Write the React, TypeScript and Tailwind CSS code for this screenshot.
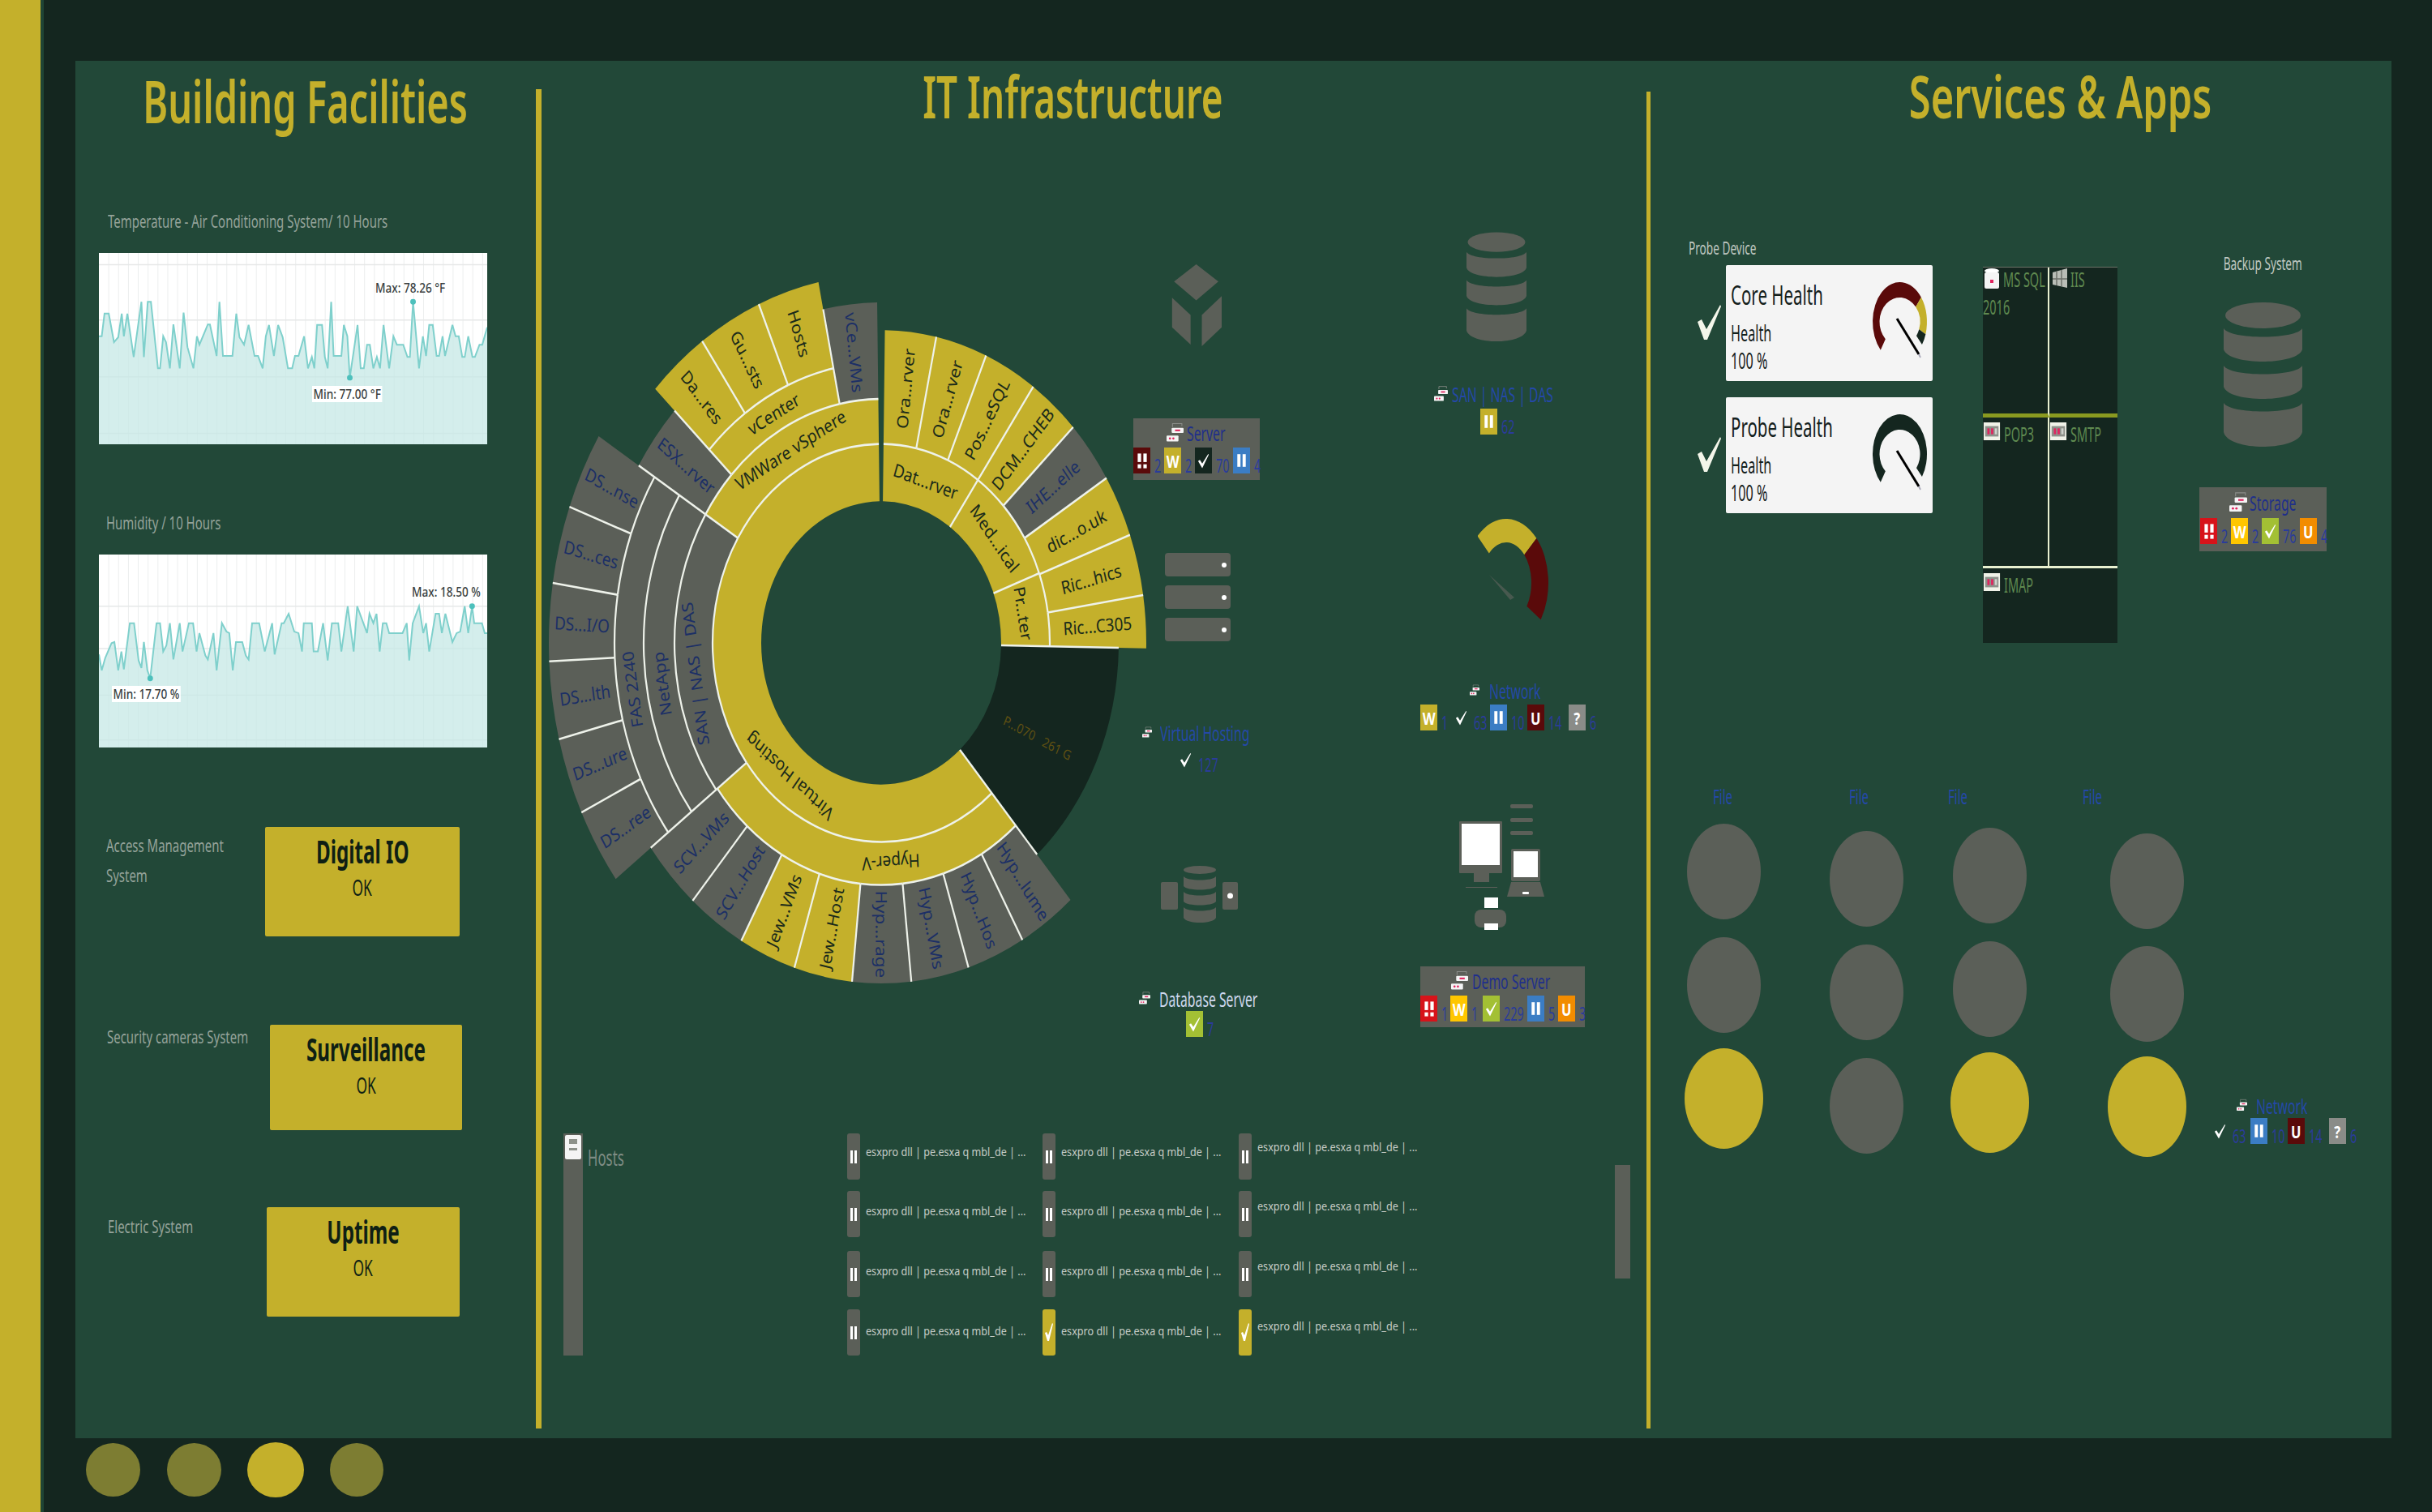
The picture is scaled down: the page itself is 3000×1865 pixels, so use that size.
import React from 'react';

// clockwise from 12 o'clock, in degrees
const pt = (rx: number, ry: number, a: number, cx = 0, cy = 0) => {
	const t = ((a - 90) * Math.PI) / 180;
	return `${(cx + rx * Math.cos(t)).toFixed(2)} ${(cy + ry * Math.sin(t)).toFixed(2)}`;
};

const band = (ix: number, iy: number, ox: number, oy: number, a0: number, a1: number, cx = 0, cy = 0) => {
	const large = a1 - a0 > 180 ? 1 : 0;
	return `M${pt(ix, iy, a0, cx, cy)} L${pt(ox, oy, a0, cx, cy)} A${ox} ${oy} 0 ${large} 1 ${pt(ox, oy, a1, cx, cy)} L${pt(ix, iy, a1, cx, cy)} A${ix} ${iy} 0 ${large} 0 ${pt(ix, iy, a0, cx, cy)}Z`;
};

const YELLOW = '#c4b02b';
const GREY = '#5b5f58';
const DARK = '#14261f';

type Seg = { r0: number; r1: number; a0: number; a1: number; fill: string; label?: string };

const radial = (r0: number, r1: number, stops: number[], labels: string[], fills: string[]): Seg[] =>
	labels.map((label, i) => ({ r0, r1, a0: stops[i], a1: stops[i + 1], fill: fills[i] ?? fills[0], label }));

const outerRings = [
	{ r0: 208, r1: 327, stops: [0.8, 12, 23.3, 35, 46.4, 58.2, 69.8, 81.2, 91] },
	{ r0: 253, r1: 356, stops: [139, 150.7, 162.4, 174, 185.8, 197.5, 209, 220.8, 233] },
	{ r0: 329, r1: 410, stops: [233, 244.4, 255.8, 267.3, 278.8, 290.3, 301.8] },
	{ r0: 293, r1: 385, stops: [313.6, 325, 336.9, 348.4] },
];

const segments: Seg[] = [
	...radial(208, 327, outerRings[0].stops, ['Ora...rver', 'Ora...rver', 'Pos...eSQL', 'DCM...CHEB', 'IHE...elle', 'dic...o.uk', 'Ric...hics', 'Ric...C305'], [YELLOW, YELLOW, YELLOW, YELLOW, GREY, YELLOW, YELLOW, YELLOW]),
	...radial(253, 356, outerRings[1].stops, ['Hyp...lume', 'Hyp...Hos', 'Hyp...VMs', 'Hyp...rage', 'Jew...Host', 'Jew...VMs', 'SCV...Host', 'SCV...VMs'], [GREY, GREY, GREY, GREY, YELLOW, YELLOW, GREY, GREY]),
	...radial(329, 410, outerRings[2].stops, ['DS...ree', 'DS...ure', 'DS...lth', 'DS...I/O', 'DS...ces', 'DS...nse'], [GREY]),
	...radial(255, 352, [301.8, 313.6], ['ESX...rver'], [GREY]),
	...radial(293, 385, outerRings[3].stops, ['Da...res', 'Gu...sts', 'Hosts'], [YELLOW]),
	...radial(255, 356, [348.4, 359.2], ['vCe...VMs'], [GREY]),
];

const plainSegments: Seg[] = [
	{ r0: 148, r1: 293, a0: 91, a1: 139, fill: DARK },
	{ r0: 148, r1: 208, a0: 0.8, a1: 91, fill: YELLOW },
	{ r0: 148, r1: 208, a0: 139, a1: 359.2, fill: YELLOW },
	{ r0: 208, r1: 255, a0: 139, a1: 233, fill: YELLOW },
	{ r0: 208, r1: 255, a0: 233, a1: 301.8, fill: GREY },
	{ r0: 255, r1: 293, a0: 233, a1: 301.8, fill: GREY },
	{ r0: 293, r1: 329, a0: 233, a1: 301.8, fill: GREY },
	{ r0: 208, r1: 255, a0: 301.8, a1: 359.2, fill: YELLOW },
	{ r0: 255, r1: 293, a0: 313.6, a1: 348.4, fill: YELLOW },
];

// white spokes that are not inside one of the outer rings: [from, to, angle]
const spokes: [number, number, number][] = [
	[148, 208, 35],
	[148, 208, 69.5],
	[148, 293, 91],
	[148, 293, 139],
	[208, 356, 233],
	[208, 352, 301.8],
	[255, 352, 313.6],
	[255, 356, 348.4],
];

// tangent labels: [text, angle, radius, rotation, colour]
const arcLabels: [string, number, number, number, string][] = [
	['Dat...rver', 18, 178, 18, '#1a2a1a'],
	['Med...ical', 52, 178, 52, '#1a2a1a'],
	['Pr...ter', 80, 178, 80, '#1a2a1a'],
	['Virtual Hosting', 219, 180, 219, '#1a2a1a'],
	['Hyper-V', 177, 230, 177, '#1a2a1a'],
	['VMWare vSphere', 331, 231, 331, '#1a2a1a'],
	['vCenter', 331, 274, 331, '#1a2a1a'],
	['SAN | NAS | DAS', 262, 232, 262, '#1c2f66'],
	['NetApp', 261, 274, 261, '#1c2f66'],
	['FAS 2240', 261, 311, 261, '#1c2f66'],
];

function Sunburst() {
	const xy = (r: number, a: number) => pt(r, r, a).split(' ');
	const line = (r0: number, r1: number, a: number) => `M${pt(r0, r0, a)} L${pt(r1, r1, a)}`;
	const all = [...plainSegments, ...segments];
	return (
		<svg width="760" height="900" viewBox="0 0 760 900" className="mt-[189px] ml-[2px] shrink-0">
			<g transform="translate(417 453) scale(1 1.18)">
				{all.map((s, i) => (
					<path key={i} d={band(s.r0, s.r0, s.r1, s.r1, s.a0, s.a1)} fill={s.fill} />
				))}
				<g fill="none" stroke="#eef2ea" strokeWidth="2.2">
					{all
						.filter(s => s.r0 > 148)
						.map((s, i) => (
							<path key={i} d={`M${pt(s.r0, s.r0, s.a0)} A${s.r0} ${s.r0} 0 0 1 ${pt(s.r0, s.r0, s.a1)}`} />
						))}
					{outerRings.map(ring =>
						ring.stops.slice(1, -1).map(a => <path key={`${ring.r0}-${a}`} d={line(ring.r0, ring.r1, a)} />),
					)}
					{spokes.map(([r0, r1, a]) => (
						<path key={a} d={line(r0, r1, a)} />
					))}
				</g>
				<g fontFamily="'Noto Sans', sans-serif" fontSize="19" textAnchor="middle" dominantBaseline="central">
					{segments.map((s, i) => {
						const mid = (s.a0 + s.a1) / 2;
						const [x, y] = xy((s.r0 + s.r1) / 2, mid);
						const rot = mid <= 180 ? mid - 90 : mid + 90;
						return (
							<text key={i} x={x} y={y} transform={`rotate(${rot} ${x} ${y})`} fill={s.fill === GREY ? '#1c2f66' : '#1a2a1a'}>
								{s.label}
							</text>
						);
					})}
					{arcLabels.map(([label, a, r, rot, fill]) => {
						const [x, y] = xy(r, a);
						return (
							<text key={label} x={x} y={y} transform={`rotate(${rot} ${x} ${y})`} fill={fill}>
								{label}
							</text>
						);
					})}
					<text transform="translate(193 99) rotate(25)" fill="#5f5012" fontSize="14">
						P...070 &#160; 261 G
					</text>
				</g>
			</g>
		</svg>
	);
}

const tempLine =
	'282,678 290,678 298,632 310,632 325,690 337,680 347,632 353,678 363,632 381,720 403,608 410,720 421,608 430,608 450,743 456,743 465,678 473,690 484,743 494,654 512,743 523,630 534,700 551,743 561,678 568,695 592,654 598,654 617,718 625,608 635,718 662,718 673,632 682,680 695,695 708,655 725,718 735,718 748,743 757,678 766,655 780,718 792,655 805,680 820,743 832,743 840,718 850,718 866,678 877,743 888,720 895,743 903,655 917,655 925,720 933,743 943,608 950,718 972,718 979,655 989,678 996,762 1018,655 1027,743 1036,743 1045,695 1053,695 1063,743 1073,720 1082,743 1092,655 1108,743 1120,678 1130,695 1148,695 1160,720 1167,720 1176,608 1193,743 1204,678 1213,718 1222,655 1232,655 1243,718 1250,718 1260,678 1267,718 1288,655 1297,678 1306,678 1316,720 1323,720 1333,678 1345,720 1352,720 1365,695 1373,695 1387,660';

const humidityLine =
	'282,1318 290,1350 300,1325 318,1295 326,1293 337,1350 346,1312 353,1348 370,1255 382,1255 395,1330 403,1345 410,1293 420,1350 428,1366 446,1255 456,1255 465,1312 474,1300 484,1255 494,1328 512,1255 520,1312 538,1255 550,1255 560,1312 568,1275 585,1320 592,1328 608,1275 617,1350 632,1255 645,1272 653,1275 663,1350 672,1293 690,1293 700,1320 708,1328 718,1255 738,1255 754,1312 775,1255 782,1318 802,1255 808,1255 822,1236 838,1272 850,1275 860,1312 865,1255 888,1255 893,1312 905,1312 920,1255 933,1330 945,1255 963,1255 972,1312 990,1221 1007,1312 1017,1221 1045,1275 1052,1236 1063,1255 1072,1236 1081,1312 1090,1255 1100,1255 1108,1275 1146,1275 1158,1255 1165,1330 1175,1255 1193,1221 1205,1275 1213,1255 1222,1312 1240,1236 1250,1236 1258,1275 1268,1236 1288,1293 1300,1275 1310,1272 1323,1221 1333,1275 1344,1221 1350,1255 1372,1255 1380,1275 1387,1275';

function Spark({ points, top, dots, rows }: { points: string; top: number; dots: [number, number][]; rows: number[] }) {
	const bottom = top + 388;
	const cols = Array.from({ length: 40 }, (_, i) => 282 + (i + 1) * 28);
	return (
		<svg viewBox={`282 ${top} 1105 388`} preserveAspectRatio="none" className="absolute inset-0 h-full w-full">
			{cols.map(x => (
				<line key={x} x1={x} x2={x} y1={top} y2={bottom} stroke="#eceeee" vectorEffect="non-scaling-stroke" />
			))}
			{rows.map(y => (
				<line key={y} x1={282} x2={1387} y1={y} y2={y} stroke="#e6e8e8" strokeWidth="1.5" vectorEffect="non-scaling-stroke" />
			))}
			<polygon points={`282,${bottom} ${points} 1387,${bottom}`} fill="#c5e8e6" fillOpacity="0.75" />
			<polyline points={points} fill="none" stroke="#7fd0cc" strokeWidth="2" vectorEffect="non-scaling-stroke" />
			{dots.map(([x, y]) => (
				<ellipse key={x} cx={x} cy={y} rx="8" ry="5.7" fill="#4dc0bc" />
			))}
		</svg>
	);
}

const chartNote = 'absolute origin-left scale-x-[0.8] whitespace-nowrap text-[17px] leading-[20px] font-medium text-[#3a3f3f]';

function NodeIcon({ className }: { className: string }) {
	return (
		<svg viewBox="0 0 20 24" className={className}>
			<path d="M7 5V1h11v3" fill="none" stroke="#8a8d88" strokeWidth="1" />
			<rect x="6" y="6" width="14" height="6" rx="1" fill="#f4f4f4" />
			<rect x="10" y="8" width="6" height="2" fill="#e0245e" />
			<rect x="0" y="15" width="14" height="7" rx="1" fill="#f4f4f4" />
			<circle cx="4" cy="18.5" r="1.3" fill="#e0245e" />
			<circle cx="8" cy="18.5" r="1.3" fill="#e0245e" />
		</svg>
	);
}

function Glyph({ kind }: { kind: string }) {
	if (kind === 'W' || kind === 'U' || kind === '?') {
		return <span className="scale-x-[0.75] text-[22px] leading-none font-bold text-white">{kind}</span>;
	}
	if (kind === 'crit') {
		return (
			<svg viewBox="0 0 20 30" className="h-[21px] w-[14px]">
				<rect x="2" y="2" width="6" height="15" fill="#fff" />
				<rect x="2" y="21" width="6" height="7" fill="#fff" />
				<rect x="12" y="2" width="6" height="15" fill="#fff" />
				<rect x="12" y="21" width="6" height="7" fill="#fff" />
			</svg>
		);
	}
	if (kind === 'pause') {
		return (
			<svg viewBox="0 0 20 30" className="h-[20px] w-[13px]">
				<rect x="2" y="3" width="6" height="24" fill="#fff" />
				<rect x="12" y="3" width="6" height="24" fill="#fff" />
			</svg>
		);
	}
	return (
		<svg viewBox="0 0 20 30" className="h-[22px] w-[15px]">
			<path d="M1 16l3-2 4 6L18 4l1 1L8 28z" fill="#fff" />
		</svg>
	);
}

function Stat({ kind, bg, count, w }: { kind: string; bg: string; count?: string; w: string }) {
	return (
		<div className={`flex shrink-0 ${w}`}>
			<div className={`flex h-[32px] w-[21px] shrink-0 items-center justify-center ${bg}`}>
				<Glyph kind={kind} />
			</div>
			{count && (
				<span className="mt-[8px] ml-[5px] origin-left scale-x-[0.6] text-[24px] leading-[28px] text-[#2a3c9a]">{count}</span>
			)}
		</div>
	);
}

const labelText = 'inline-block origin-left scale-x-[0.63] whitespace-nowrap text-[25px] leading-[24px]';
const sideLabel = 'origin-left scale-x-[0.68] whitespace-nowrap text-[22px] text-[#95a39a]';

function Badge({ children, className }: { children: React.ReactNode; className: string }) {
	return <div className={`flex flex-col bg-[#5b5f58] ${className}`}>{children}</div>;
}

function Db({ className }: { className: string }) {
	return (
		<svg viewBox="0 0 100 180" preserveAspectRatio="none" className={className}>
			<g fill="#5b5f58">
				<ellipse cx="50" cy="18" rx="48" ry="16" />
				<path d="M0 34c8 14 92 14 100 0v26c-6 20-94 20-100 0z" />
				<path d="M0 80c8 14 92 14 100 0v26c-6 20-94 20-100 0z" />
				<path d="M0 126c8 14 92 14 100 0v36c-6 24-94 24-100 0z" />
			</g>
		</svg>
	);
}

function CoreGauge({ stops }: { stops: [number, number, string][] }) {
	return (
		<svg viewBox="0 0 67 95" className="mt-[20px] h-[95px] w-[67px] shrink-0 overflow-visible">
			{stops.map(([a0, a1, fill]) => (
				<path key={a0} d={band(25, 30, 33.5, 49, a0, a1, 33.5, 50)} fill={fill} />
			))}
			<line x1="30" y1="46" x2="57" y2="90" stroke="#000" strokeWidth="3" />
			<line x1="57" y1="90" x2="59" y2="94" stroke="#aab" strokeWidth="2" />
		</svg>
	);
}

function HealthCard({ title, stops, className }: { title: string; stops: [number, number, string][]; className: string }) {
	return (
		<div className={`flex ${className}`}>
			<svg viewBox="0 0 29 43" className="mt-[49px] mr-[6px] ml-[11px] h-[43px] w-[29px] shrink-0">
				<polygon points="0,21 5,18 11,30 28,0 29,2 12,43 8,43" fill="#f4f6ea" />
			</svg>
			<div className="flex h-[143px] w-[255px] shrink-0 rounded-[2px] bg-[#f4f4f4] pr-[7px] pl-[6px] text-[#14201c]">
				<div className="min-w-0 flex-1">
					<p className="mt-[19px] origin-left scale-x-[0.64] whitespace-nowrap text-[32px] leading-[36px]">{title}</p>
					<p className="mt-[12px] origin-left scale-x-[0.6] whitespace-nowrap text-[27px] leading-[34px]">Health</p>
					<p className="origin-left scale-x-[0.6] whitespace-nowrap text-[27px] leading-[34px]">100 %</p>
				</div>
				<CoreGauge stops={stops} />
			</div>
		</div>
	);
}

const svcText = 'origin-left scale-x-[0.58] whitespace-nowrap text-[25px] leading-[28px] text-[#5f8a50]';

function SvcNode() {
	return (
		<svg viewBox="0 0 22 24" className="h-[22px] w-[22px] shrink-0">
			<rect width="22" height="24" fill="#f0f2e8" />
			<rect x="2" y="5" width="18" height="14" fill="#8d918a" />
			<rect x="5" y="8" width="3" height="8" fill="#e0245e" />
			<rect x="10" y="8" width="3" height="8" fill="#e0245e" />
			<rect x="15" y="8" width="3" height="8" fill="#cfd2cc" />
		</svg>
	);
}

function Services() {
	return (
		<div className="mt-[178px] ml-[62px] grid h-[464px] w-[166px] shrink-0 grid-cols-[82px_84px] grid-rows-[185px_186px_93px] border-t border-[#6d7268] bg-[#14261f]">
			<div className="border-r-2 border-b-[5px] border-r-[#e8f0d0] border-b-[#8a9a20]">
				<div className="flex items-center">
					<svg viewBox="0 0 20 28" className="ml-[1px] h-[28px] w-[20px] shrink-0">
						<ellipse cx="10" cy="4" rx="9" ry="3" fill="#fff" />
						<rect x="1" y="6" width="18" height="20" rx="2" fill="#f4f4f4" />
						<rect x="8" y="15" width="4" height="4" fill="#e0245e" />
					</svg>
					<span className={`ml-[4px] ${svcText}`}>MS SQL</span>
				</div>
				<p className={`mt-[6px] ${svcText}`}>2016</p>
			</div>
			<div className="border-b-[5px] border-b-[#8a9a20]">
				<div className="flex items-center">
					<svg viewBox="0 0 20 28" className="ml-[3px] h-[28px] w-[20px] shrink-0">
						<path d="M1 6l18-5v24l-18-4z" fill="#b9bdb6" />
						<path d="M6 5v17M12 3v20M1 14h18" stroke="#6e716b" strokeWidth="1.5" />
					</svg>
					<span className={`ml-[3px] ${svcText}`}>IIS</span>
				</div>
			</div>
			<div className="flex items-start border-r-2 border-b-[3px] border-r-[#e8f0d0] border-b-[#e8f0d0] pt-[6px]">
				<SvcNode />
				<span className={`ml-[4px] ${svcText}`}>POP3</span>
			</div>
			<div className="flex items-start border-b-[3px] border-b-[#e8f0d0] pt-[6px]">
				<SvcNode />
				<span className={`ml-[4px] ${svcText}`}>SMTP</span>
			</div>
			<div className="col-span-2 flex items-start pt-[6px]">
				<SvcNode />
				<span className={`ml-[4px] ${svcText}`}>IMAP</span>
			</div>
		</div>
	);
}

const hostText = 'origin-left scale-x-[0.9] whitespace-nowrap text-[14px] leading-[20px] text-[#c6ccc6]';
const hostOffsets = ['mt-[13px]', 'mt-[15px]', 'mt-[15px]', 'mt-[17px]'];
const lastColOffsets = ['mt-[7px]', 'mt-[9px]', 'mt-[9px]', 'mt-[11px]'];

function HostCell({ row, col }: { row: number; col: number }) {
	const ok = row === 3 && col > 0;
	return (
		<div className="flex h-full items-start">
			<div className={`flex h-[57px] w-[16px] shrink-0 items-center justify-center rounded-[3px] ${ok ? 'bg-[#c4b02b]' : 'bg-[#5b5f58]'}`}>
				{ok ? (
					<svg viewBox="0 0 10 24" className="h-[24px] w-[10px]">
						<path d="M0 12l2-1 2 4L9 0l1 1-5 21H3z" fill="#fff" />
					</svg>
				) : (
					<svg viewBox="0 0 8 16" className="h-[16px] w-[8px]">
						<rect x="0" width="3" height="16" fill="#fff" />
						<rect x="5" width="3" height="16" fill="#fff" />
					</svg>
				)}
			</div>
			<p className={`ml-[7px] ${col === 2 ? lastColOffsets[row] : hostOffsets[row]} ${hostText}`}>esxpro dll | pe.esxa q mbl_de | ...</p>
		</div>
	);
}

function Oval({ className }: { className: string }) {
	return <div className={`rounded-[50%] ${className}`} />;
}

function StatusBox({ title, className }: { title: string; className: string }) {
	return (
		<div className={`flex shrink-0 flex-col items-center rounded-[2px] bg-[#c4b02b] text-[#0f1f14] ${className}`}>
			<p className="mt-[6px] scale-x-[0.62] whitespace-nowrap text-[39px] leading-[48px] font-bold">{title}</p>
			<p className="scale-x-[0.62] text-[28px] leading-[40px]">OK</p>
		</div>
	);
}

const greyOval = 'h-[118px] w-[91px] bg-[#5b5f58]';
const yellowOval = 'h-[124px] w-[97px] bg-[#c4b02b]';
const fileLabel = 'origin-left scale-x-[0.6] text-[25px] leading-[20px] text-[#2448a8]';

export default function App() {
	return (
		<div className="flex h-[1865px] w-[3000px] overflow-hidden bg-[#14261f] font-['Noto_Sans',sans-serif]">
			<div className="w-[54px] shrink-0 border-r-[4px] border-r-[#1f4434] bg-[#c4b02b]" />
			<div className="pt-[75px] pl-[39px]">
				<main className="flex h-[1699px] w-[2857px] bg-[#224838]">
					{/* Building Facilities */}
					<section className="w-[568px] shrink-0 pl-[29px]">
						<div className="mt-[18px] -ml-[29px] flex h-[62px] w-[568px] justify-center">
							<h1 className="scale-x-[0.643] whitespace-nowrap text-[73px] leading-[62px] font-semibold text-[#c4b02b]">Building Facilities</h1>
						</div>
						<p className={`mt-[107px] ml-[11px] leading-[20px] ${sideLabel}`}>Temperature - Air Conditioning System/ 10 Hours</p>
						<div className="relative mt-[30px] h-[236px] w-[479px] bg-white">
							<Spark points={tempLine} top={509} dots={[[1176, 608], [996, 762]]} rows={[533, 645, 760, 875]} />
							<span className={`top-[33px] left-[341px] ${chartNote}`}>Max: 78.26 °F</span>
							<span className={`top-[164px] left-[263px] bg-white px-[2px] ${chartNote}`}>Min: 77.00 °F</span>
						</div>
						<p className={`mt-[86px] ml-[9px] leading-[20px] ${sideLabel}`}>Humidity / 10 Hours</p>
						<div className="relative mt-[30px] h-[238px] w-[479px] bg-white">
							<Spark points={humidityLine} top={1117} dots={[[428, 1366], [1344, 1221]]} rows={[1221, 1306, 1400, 1490]} />
							<span className={`top-[36px] left-[386px] ${chartNote}`}>Max: 18.50 %</span>
							<span className={`top-[162px] left-[16px] bg-white px-[2px] ${chartNote}`}>Min: 17.70 %</span>
						</div>
						<div className="mt-[98px] flex">
							<div className="w-[205px] shrink-0 pt-[4px] pl-[9px]">
								<p className={`leading-[37px] ${sideLabel}`}>Access Management</p>
								<p className={`leading-[37px] ${sideLabel}`}>System</p>
							</div>
							<StatusBox title="Digital IO" className="h-[135px] w-[240px]" />
						</div>
						<div className="mt-[109px] flex">
							<div className="w-[211px] shrink-0 pt-[4px] pl-[10px]">
								<p className={`leading-[20px] ${sideLabel}`}>Security cameras System</p>
							</div>
							<StatusBox title="Surveillance" className="h-[130px] w-[237px]" />
						</div>
						<div className="mt-[95px] flex">
							<div className="w-[207px] shrink-0 pt-[13px] pl-[11px]">
								<p className={`leading-[20px] ${sideLabel}`}>Electric System</p>
							</div>
							<StatusBox title="Uptime" className="h-[135px] w-[238px]" />
						</div>
					</section>

					<div className="mt-[35px] h-[1652px] w-[7px] shrink-0 bg-[#c4b02b]" />

					{/* IT Infrastructure */}
					<section className="w-[1363px] shrink-0">
						<div className="mt-[12px] mb-[2px] flex h-[62px] w-[1310px] justify-center">
							<h1 className="scale-x-[0.627] whitespace-nowrap text-[73px] leading-[62px] font-semibold text-[#c4b02b]">IT Infrastructure</h1>
						</div>
						<div className="flex h-[1247px]">
							<Sunburst />
							<div className="-ml-[32px] flex w-[354px] shrink-0 flex-col items-start">
								<svg viewBox="160 98 152 152" preserveAspectRatio="none" className="mt-[175px] ml-[47px] h-[101px] w-[62px]">
									<g fill="#5b5f58">
										<polygon points="168,130 235,98 302,130 235,165" />
										<polygon points="162,160 218,192 218,247 162,215" />
										<polygon points="252,192 312,157 312,215 252,250" />
									</g>
								</svg>
								<Badge className="mt-[89px] h-[76px] w-[156px]">
									<div className="flex h-[36px] items-center pl-[41px]">
										<NodeIcon className="h-[34px] w-[21px] shrink-0" />
										<span className={`ml-[4px] ${labelText} text-[#1f2f8a]`}>Server</span>
									</div>
									<div className="flex">
										<Stat kind="crit" bg="bg-[#5a0a0a]" count="2" w="w-[38px]" />
										<Stat kind="W" bg="bg-[#c4b02b]" count="2" w="w-[38px]" />
										<Stat kind="ok" bg="bg-[#14261f]" count="70" w="w-[47px]" />
										<Stat kind="pause" bg="bg-[#3b7dc4]" count="4" w="w-[33px]" />
									</div>
								</Badge>
								<div className="mt-[90px] ml-[39px] flex flex-col gap-[11px]">
									{[0, 1, 2].map(i => (
										<div key={i} className="flex h-[29px] w-[81px] items-center justify-end rounded-[4px] bg-[#5b5f58] pr-[5px]">
											<div className="h-[6px] w-[6px] rounded-full bg-white" />
										</div>
									))}
								</div>
								<div className="mt-[104px] ml-[11px] flex h-[17px] items-center">
									<NodeIcon className="h-[17px] w-[12px] shrink-0" />
									<span className={`ml-[10px] ${labelText} text-[#2448a8]`}>Virtual Hosting</span>
								</div>
								<div className="mt-[9px] ml-[54px]">
									<Stat kind="ok" bg="" count="127" w="w-[60px]" />
								</div>
								<svg viewBox="0 0 95 75" className="mt-[110px] ml-[34px] h-[75px] w-[95px]">
									<g fill="#5b5f58">
										<rect x="0" y="21" width="21" height="34" rx="2" />
										<ellipse cx="48" cy="6" rx="20" ry="5" />
										<path d="M28 14c4 6 36 6 40 0v12c-4 6-36 6-40 0zM28 33c4 6 36 6 40 0v12c-4 6-36 6-40 0zM28 52c4 6 36 6 40 0v13c-4 8-36 8-40 0z" />
										<rect x="76" y="21" width="19" height="34" rx="2" />
									</g>
									<circle cx="85.5" cy="38" r="3.5" fill="#fff" />
								</svg>
								<div className="mt-[81px] ml-[7px] flex h-[17px] items-center">
									<NodeIcon className="h-[17px] w-[14px] shrink-0" />
									<span className={`ml-[11px] ${labelText} text-[#cfd8ee]`}>Database Server</span>
								</div>
								<div className="mt-[7px] ml-[65px]">
									<Stat kind="ok" bg="bg-[#a3c034]" count="7" w="w-[40px]" />
								</div>
							</div>
							<div className="flex w-[260px] shrink-0 flex-col items-start">
								<Db className="mt-[134px] ml-[57px] h-[136px] w-[74px]" />
								<div className="mt-[53px] ml-[17px] flex h-[24px] items-center">
									<NodeIcon className="h-[24px] w-[17px] shrink-0" />
									<span className={`ml-[5px] ${labelText} text-[#2448a8]`}>SAN | NAS | DAS</span>
								</div>
								<div className="mt-[6px] ml-[74px]">
									<Stat kind="pause" bg="bg-[#c4b02b]" count="62" w="w-[50px]" />
								</div>
								<svg viewBox="0 0 90 126" className="mt-[100px] ml-[71px] h-[126px] w-[90px]">
									<path d={band(31, 50, 52, 79, -43, 46, 35, 79)} fill="#c4b02b" />
									<path d={band(31, 50, 52, 79, 46, 125, 35, 79)} fill="#5a0a0a" />
									<polygon points="14,69 45,97 40,100" fill="#48594f" />
								</svg>
								<div className="mt-[77px] ml-[61px] flex h-[17px] items-center">
									<NodeIcon className="h-[17px] w-[12px] shrink-0" />
									<span className={`ml-[12px] ${labelText} text-[#2448a8]`}>Network</span>
								</div>
								<div className="mt-[9px] flex">
									<Stat kind="W" bg="bg-[#c4b02b]" count="1" w="w-[40px]" />
									<Stat kind="ok" bg="" count="63" w="w-[46px]" />
									<Stat kind="pause" bg="bg-[#3b7dc4]" count="10" w="w-[46px]" />
									<Stat kind="U" bg="bg-[#5a0a0a]" count="14" w="w-[51px]" />
									<Stat kind="?" bg="bg-[#8a8c88]" count="6" w="w-[30px]" />
								</div>
								<svg viewBox="0 0 110 165" className="mt-[83px] ml-[43px] h-[165px] w-[110px]">
									<g fill="#5b5f58">
										<rect x="5" y="25" width="53" height="64" rx="1" />
										<rect x="23" y="89" width="19" height="11" />
										<rect x="13" y="106" width="39" height="1" />
										<rect x="68" y="4" width="28" height="5" rx="2" />
										<rect x="68" y="21" width="28" height="5" rx="2" />
										<rect x="68" y="37" width="28" height="5" rx="2" />
										<rect x="69" y="59" width="36" height="40" rx="2" />
										<polygon points="69,100 105,100 110,118 64,118" />
										<rect x="24" y="134" width="39" height="22" rx="8" />
									</g>
									<g fill="#fff">
										<rect x="8" y="28" width="47" height="51" />
										<rect x="72" y="62" width="30" height="32" />
										<rect x="83" y="112" width="8" height="3" rx="1" />
										<rect x="36" y="119" width="17" height="13" />
										<rect x="36" y="151" width="17" height="8" />
									</g>
								</svg>
								<Badge className="mt-[39px] h-[75px] w-[203px]">
									<div className="flex h-[36px] items-center pl-[38px]">
										<NodeIcon className="h-[34px] w-[21px] shrink-0" />
										<span className={`ml-[5px] ${labelText} text-[#1f2f8a]`}>Demo Server</span>
									</div>
									<div className="flex">
										<Stat kind="crit" bg="bg-[#d7131a]" count="1" w="w-[37px]" />
										<Stat kind="W" bg="bg-[#ffc600]" count="1" w="w-[40px]" />
										<Stat kind="ok" bg="bg-[#a3c034]" count="229" w="w-[55px]" />
										<Stat kind="pause" bg="bg-[#3b7dc4]" count="5" w="w-[38px]" />
										<Stat kind="U" bg="bg-[#f28c00]" count="3" w="w-[33px]" />
									</div>
								</Badge>
							</div>
						</div>
						<div className="ml-[27px] flex">
							<div className="h-[274px] w-[24px] shrink-0 bg-[#5b5f58] pt-[1px]">
								<svg viewBox="0 0 20 30" className="mx-auto h-[32px] w-[20px]">
									<rect width="20" height="30" rx="2" fill="#f4f4f4" />
									<rect x="5" y="5" width="10" height="6" fill="#8d918a" />
									<rect x="5" y="16" width="10" height="3" fill="#8d918a" />
								</svg>
							</div>
							<div className="w-[326px] shrink-0 pt-[17px] pl-[6px]">
								<p className="origin-left scale-x-[0.6] text-[28px] leading-[24px] text-[#7f8c84]">Hosts</p>
							</div>
							<div className="grid w-[947px] shrink-0 grid-cols-[241px_242px_464px] grid-rows-[71px_74px_72px_58px]">
								{[0, 1, 2, 3].map(row =>
									[0, 1, 2].map(col => <HostCell key={`${row}-${col}`} row={row} col={col} />),
								)}
							</div>
							<div className="mt-[39px] h-[140px] w-[19px] shrink-0 bg-[#5b5f58]" />
						</div>
					</section>

					<div className="mt-[38px] h-[1649px] w-[5px] shrink-0 bg-[#c4b02b]" />

					{/* Services & Apps */}
					<section className="min-w-0 flex-1">
						<div className="mt-[12px] mb-[2px] flex h-[62px] w-[1012px] justify-center">
							<h1 className="scale-x-[0.668] whitespace-nowrap text-[73px] leading-[62px] font-semibold text-[#c4b02b]">Services &amp; Apps</h1>
						</div>
						<div className="flex h-[642px]">
							<div className="ml-[47px] w-[301px] shrink-0">
								<p className="mt-[144px] origin-left scale-x-[0.62] whitespace-nowrap text-[22px] leading-[20px] text-[#c0c8c2]">Probe Device</p>
								<HealthCard
									title="Core Health"
									className="mt-[12px]"
									stops={[
										[-135, 52, '#5a0a0a'],
										[52, 108, '#c4b02b'],
										[108, 125, '#14261f'],
									]}
								/>
								<HealthCard title="Probe Health" className="mt-[20px]" stops={[[-135, 125, '#14261f']]} />
							</div>
							<Services />
							<div className="ml-[101px] flex w-[157px] shrink-0 flex-col items-center">
								<p className="mt-[163px] h-[20px] scale-x-[0.62] whitespace-nowrap text-[22px] leading-[20px] text-[#c0c8c2]">Backup System</p>
								<Db className="mt-[37px] h-[180px] w-[97px]" />
								<Badge className="mt-[50px] h-[79px] w-[157px]">
									<div className="flex h-[38px] items-center pl-[37px]">
										<NodeIcon className="h-[34px] w-[22px] shrink-0" />
										<span className={`ml-[3px] ${labelText} text-[#1f2f8a]`}>Storage</span>
									</div>
									<div className="flex pl-[1px]">
										<Stat kind="crit" bg="bg-[#d7131a]" count="2" w="w-[38px]" />
										<Stat kind="W" bg="bg-[#ffc600]" count="2" w="w-[38px]" />
										<Stat kind="ok" bg="bg-[#a3c034]" count="76" w="w-[47px]" />
										<Stat kind="U" bg="bg-[#f28c00]" count="4" w="w-[33px]" />
									</div>
								</Badge>
							</div>
						</div>
						<div className="mt-[179px] ml-[77px] flex h-[20px]">
							<span className={`w-[168px] ${fileLabel}`}>File</span>
							<span className={`w-[122px] ${fileLabel}`}>File</span>
							<span className={`w-[166px] ${fileLabel}`}>File</span>
							<span className={fileLabel}>File</span>
						</div>
						<div className="mt-[24px] ml-[42px] flex items-start">
							<div className="flex w-[97px] shrink-0 flex-col items-center">
								<Oval className={greyOval} />
								<Oval className={`mt-[22px] ${greyOval}`} />
								<Oval className={`mt-[19px] ${yellowOval}`} />
							</div>
							<div className="mt-[9px] ml-[82px] flex flex-col">
								<Oval className={greyOval} />
								<Oval className={`mt-[22px] ${greyOval}`} />
								<Oval className={`mt-[22px] ${greyOval}`} />
							</div>
							<div className="mt-[5px] ml-[58px] flex w-[96px] shrink-0 flex-col items-center">
								<Oval className={greyOval} />
								<Oval className={`mt-[22px] ${greyOval}`} />
								<Oval className={`mt-[19px] ${yellowOval}`} />
							</div>
							<div className="mt-[12px] ml-[98px] flex w-[97px] shrink-0 flex-col items-center">
								<Oval className={greyOval} />
								<Oval className={`mt-[21px] ${greyOval}`} />
								<Oval className={`mt-[18px] ${yellowOval}`} />
							</div>
							<div className="mt-[339px] ml-[31px] flex flex-col items-start">
								<div className="ml-[31px] flex h-[17px] items-center">
									<NodeIcon className="h-[17px] w-[13px] shrink-0" />
									<span className={`ml-[11px] ${labelText} text-[#2448a8]`}>Network</span>
								</div>
								<div className="mt-[7px] flex">
									<Stat kind="ok" bg="" count="63" w="w-[48px]" />
									<Stat kind="pause" bg="bg-[#3b7dc4]" count="10" w="w-[46px]" />
									<Stat kind="U" bg="bg-[#5a0a0a]" count="14" w="w-[51px]" />
									<Stat kind="?" bg="bg-[#8a8c88]" count="6" w="w-[30px]" />
								</div>
							</div>
						</div>
					</section>
				</main>
				<footer className="mt-[6px] ml-[13px] flex items-start">
					<div className="h-[66px] w-[67px] rounded-[50%] bg-[#7d7d32]" />
					<div className="ml-[33px] h-[66px] w-[67px] rounded-[50%] bg-[#7d7d32]" />
					<div className="ml-[32px] -mt-[1px] h-[68px] w-[70px] rounded-[50%] bg-[#c4b02b]" />
					<div className="ml-[32px] h-[66px] w-[66px] rounded-[50%] bg-[#7d7d32]" />
				</footer>
			</div>
		</div>
	);
}
